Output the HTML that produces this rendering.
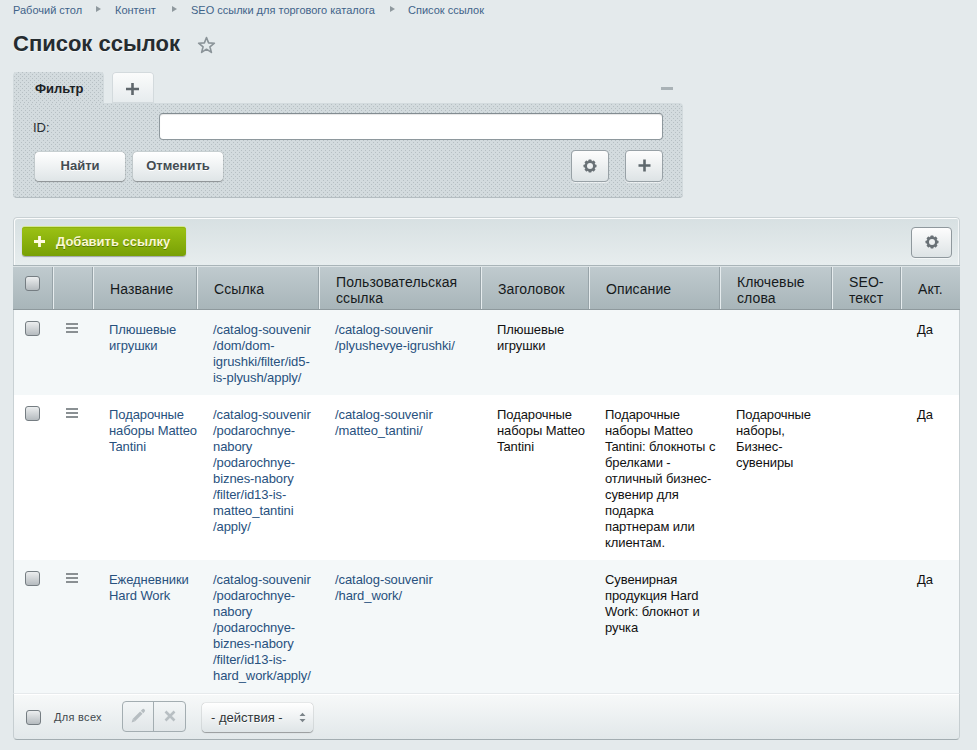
<!DOCTYPE html>
<html><head><meta charset="utf-8">
<style>
*{box-sizing:border-box;}
html,body{margin:0;padding:0;}
body{width:977px;height:750px;overflow:hidden;position:relative;background:#e4eaec;font-family:"Liberation Sans",sans-serif;}
.a{position:absolute;}
.bc{position:absolute;top:3px;font-size:11px;line-height:14px;color:#3f6389;white-space:nowrap;}
.arr{position:absolute;top:6px;width:0;height:0;border-left:5px solid #8f999e;border-top:3.5px solid transparent;border-bottom:3.5px solid transparent;}
.title{position:absolute;left:13px;top:31px;font-size:22px;line-height:26px;font-weight:bold;color:#252c30;text-shadow:0 1px rgba(255,255,255,.6);white-space:nowrap;}
.dots{background-color:#d3dbde;overflow:hidden;}
.dots svg{display:block;}
.btn{position:absolute;height:29px;border-radius:4px;background:linear-gradient(#ffffff,#dfe5e7);box-shadow:0 0 1px rgba(0,0,0,.55),0 1px 1px rgba(0,0,0,.3);font-size:13px;font-weight:bold;color:#434c52;text-align:center;line-height:27px;white-space:nowrap;text-shadow:0 1px #fff;}
.sbtn{position:absolute;border-radius:4px;border:1px solid #8f989d;background:linear-gradient(#fdfdfd,#dde3e5);box-shadow:0 1px rgba(255,255,255,.6);}
.cb{position:absolute;width:15px;height:15px;border-radius:3px;border:1px solid #757d82;background:linear-gradient(#eceeef,#b5bbbf);}
.hd{position:absolute;top:265px;height:45px;}
.sep{position:absolute;top:267px;height:42px;width:2px;border-left:1px solid #97a3a8;border-right:1px solid #e6ecee;}
.ht{position:absolute;font-size:14px;letter-spacing:.1px;line-height:16px;color:#161a1c;white-space:nowrap;}
.t{position:absolute;font-size:13px;line-height:16px;color:#111;white-space:nowrap;letter-spacing:-.08px;}
.l{color:#28517e;}
.menu{position:absolute;width:12px;height:10px;border-top:2px solid #8a9093;border-bottom:2px solid #8a9093;}
.menu:after{content:"";position:absolute;left:0;right:0;top:2px;height:2px;background:#8a9093;}
</style></head>
<body>
<svg width="0" height="0" style="position:absolute"><defs><pattern id="dp" width="4" height="4" patternUnits="userSpaceOnUse"><rect x="2" y="1" width="1" height="1" fill="#b6bfc3"/><rect x="0" y="3" width="1" height="1" fill="#b6bfc3"/></pattern><pattern id="dt" width="4" height="4" patternUnits="userSpaceOnUse"><rect x="1" y="0" width="1" height="1" fill="#b6bfc3"/><rect x="3" y="2" width="1" height="1" fill="#b6bfc3"/></pattern><mask id="gm"><rect width="14" height="14" fill="#fff"/><circle cx="7" cy="7" r="3" fill="#000"/></mask></defs></svg>
<!-- breadcrumbs -->
<div class="bc" style="left:13px">Рабочий стол</div>
<div class="arr" style="left:96px"></div>
<div class="bc" style="left:115px">Контент</div>
<div class="arr" style="left:172px"></div>
<div class="bc" style="left:191px">SEO ссылки для торгового каталога</div>
<div class="arr" style="left:390px"></div>
<div class="bc" style="left:408px">Список ссылок</div>
<div class="title">Список ссылок</div>
<svg class="a" style="left:196.5px;top:36px" width="19" height="18" viewBox="0 0 19 18"><path d="M9.5 1.5 L11.6 6.9 L17.4 7.2 L12.9 10.8 L14.4 16.4 L9.5 13.2 L4.6 16.4 L6.1 10.8 L1.6 7.2 L7.4 6.9 Z" fill="none" stroke="#8a9398" stroke-width="1.6" stroke-linejoin="round"/></svg>

<!-- filter -->
<div class="a dots" style="left:13px;top:72px;width:91px;height:32px;border-radius:4px 4px 0 0;"><svg width="91" height="32"><rect width="91" height="32" fill="url(#dt)"/></svg></div>
<div class="a" style="left:35px;top:81px;font-size:13px;font-weight:bold;line-height:16px;color:#1c2124;">Фильтр</div>
<div class="a" style="left:112px;top:72px;width:42px;height:31px;border-radius:4px 4px 0 0;background:linear-gradient(#fbfcfc,#e6ebed);box-shadow:inset 0 0 0 1px #d3dadd;"></div>
<svg class="a" style="left:126px;top:83px" width="13" height="12" viewBox="0 0 13 12"><path d="M6.5 0v12M0 6h13" stroke="#5f676c" stroke-width="2.6"/></svg>
<div class="a" style="left:661px;top:87px;width:12px;height:3px;background:#a9b2b6;"></div>
<div class="a dots" style="left:13px;top:103px;width:670px;height:95px;border-radius:0 4px 4px 4px;border-bottom:1px solid #b4bdc1;"><svg width="670" height="95"><rect width="670" height="95" fill="url(#dp)"/></svg></div>
<div class="a" style="left:33px;top:120px;font-size:13px;line-height:16px;color:#2a2f33;">ID:</div>
<div class="a" style="left:159px;top:113px;width:504px;height:27px;border-radius:4px;background:#fff;border:1px solid #8e989d;border-top-color:#828c91;box-shadow:inset 0 1px 1px rgba(0,0,0,.1);"></div>
<div class="btn" style="left:35px;top:152px;width:90px;">Найти</div>
<div class="btn" style="left:133px;top:152px;width:90px;">Отменить</div>
<div class="sbtn" style="left:571px;top:150px;width:38px;height:32px;border-color:#98a1a6;"></div>
<div class="sbtn" style="left:625px;top:150px;width:38px;height:32px;border-color:#98a1a6;"></div>
<svg class="a" style="left:583px;top:159px" width="14" height="14" viewBox="0 0 14 14"><g fill="#697176" mask="url(#gm)"><circle cx="7" cy="7" r="5.3"/><rect x="5.4" y="0.5" width="3.2" height="13" rx="0.8"/><rect x="0.5" y="5.4" width="13" height="3.2" rx="0.8"/><rect x="5.4" y="0.5" width="3.2" height="13" rx="0.8" transform="rotate(45 7 7)"/><rect x="5.4" y="0.5" width="3.2" height="13" rx="0.8" transform="rotate(-45 7 7)"/></g></svg>
<svg class="a" style="left:638px;top:159px" width="13" height="13" viewBox="0 0 13 13"><path d="M6.5 0.5v12M0.5 6.5h12" stroke="#5f686d" stroke-width="2.6"/></svg>

<!-- table container -->
<div class="a" style="left:13px;top:217px;width:947px;height:523px;border-radius:4px;background:#fff;"></div>
<div class="a" style="left:13px;top:217px;width:947px;height:48px;border-radius:4px 4px 0 0;background:linear-gradient(#d7e0e2,#e7edee);border:1px solid #c9d1d4;border-bottom:none;box-shadow:inset 1px 1px #fbfcfc,inset -1px 0 #f3f6f7;"></div>
<div class="a" style="left:22px;top:227px;width:164px;height:29px;border-radius:3px;background:linear-gradient(#9cc214,#78a005);box-shadow:0 -1px #d3e88f,inset 0 1px #8fb00f,0 1px 1px rgba(0,0,0,.3);"></div>
<svg class="a" style="left:33.5px;top:236px" width="11" height="11" viewBox="0 0 11 11"><path d="M5.5 0v11M0 5.5h11" stroke="#fffbe0" stroke-width="2.8"/></svg>
<div class="a" style="left:56px;top:234px;font-size:13px;font-weight:bold;line-height:16px;color:#fbf8d2;text-shadow:0 1px rgba(60,85,0,.6);white-space:nowrap;">Добавить ссылку</div>
<div class="sbtn" style="left:911px;top:227px;width:41px;height:31px;"></div>
<svg class="a" style="left:925px;top:235px" width="14" height="14" viewBox="0 0 14 14"><g fill="#697176" mask="url(#gm)"><circle cx="7" cy="7" r="5.3"/><rect x="5.4" y="0.5" width="3.2" height="13" rx="0.8"/><rect x="0.5" y="5.4" width="13" height="3.2" rx="0.8"/><rect x="5.4" y="0.5" width="3.2" height="13" rx="0.8" transform="rotate(45 7 7)"/><rect x="5.4" y="0.5" width="3.2" height="13" rx="0.8" transform="rotate(-45 7 7)"/></g></svg>

<!-- header -->
<div class="hd" style="left:13px;width:947px;background:linear-gradient(#c0cbcf,#a8b5b9);border-top:1px solid #a9b4b8;border-bottom:1px solid #8e999d;box-shadow:inset 0 1px #dde4e6;"></div>
<div class="sep" style="left:52px"></div>
<div class="sep" style="left:92px"></div>
<div class="sep" style="left:196px"></div>
<div class="sep" style="left:318px"></div>
<div class="sep" style="left:480px"></div>
<div class="sep" style="left:588px"></div>
<div class="sep" style="left:719px"></div>
<div class="sep" style="left:831px"></div>
<div class="sep" style="left:900px"></div>
<div class="cb" style="left:25px;top:276px"></div>
<div class="ht" style="left:110px;top:281px">Название</div>
<div class="ht" style="left:214px;top:281px">Ссылка</div>
<div class="ht" style="left:336px;top:274px">Пользовательская<br>ссылка</div>
<div class="ht" style="left:498px;top:281px">Заголовок</div>
<div class="ht" style="left:606px;top:281px">Описание</div>
<div class="ht" style="left:737px;top:274px">Ключевые<br>слова</div>
<div class="ht" style="left:849px;top:274px">SEO-<br>текст</div>
<div class="ht" style="left:918px;top:281px">Акт.</div>

<!-- rows -->
<div class="a" style="left:13px;top:310px;width:947px;height:85px;background:#f4f8f9;"></div>
<div class="a" style="left:13px;top:395px;width:947px;height:165px;background:#fff;"></div>
<div class="a" style="left:13px;top:560px;width:947px;height:133px;background:#f4f8f9;"></div>
<div class="a" style="left:13px;top:310px;width:947px;height:383px;border-left:1px solid #c9d1d4;border-right:1px solid #c9d1d4;"></div>

<div class="cb" style="left:25px;top:321px"></div>
<div class="menu" style="left:66px;top:323px"></div>
<div class="t l" style="left:109px;top:322px">Плюшевые<br>игрушки</div>
<div class="t l" style="left:213px;top:322px">/catalog-souvenir<br>/dom/dom-<br>igrushki/filter/id5-<br>is-plyush/apply/</div>
<div class="t l" style="left:335px;top:322px">/catalog-souvenir<br>/plyushevye-igrushki/</div>
<div class="t" style="left:497px;top:322px">Плюшевые<br>игрушки</div>
<div class="t" style="left:917px;top:322px">Да</div>

<div class="cb" style="left:25px;top:406px"></div>
<div class="menu" style="left:66px;top:408px"></div>
<div class="t l" style="left:109px;top:407px">Подарочные<br>наборы Matteo<br>Tantini</div>
<div class="t l" style="left:213px;top:407px">/catalog-souvenir<br>/podarochnye-<br>nabory<br>/podarochnye-<br>biznes-nabory<br>/filter/id13-is-<br>matteo_tantini<br>/apply/</div>
<div class="t l" style="left:335px;top:407px">/catalog-souvenir<br>/matteo_tantini/</div>
<div class="t" style="left:497px;top:407px">Подарочные<br>наборы Matteo<br>Tantini</div>
<div class="t" style="left:605px;top:407px">Подарочные<br>наборы Matteo<br>Tantini: блокноты с<br>брелками -<br>отличный бизнес-<br>сувенир для<br>подарка<br>партнерам или<br>клиентам.</div>
<div class="t" style="left:736px;top:407px">Подарочные<br>наборы,<br>Бизнес-<br>сувениры</div>
<div class="t" style="left:917px;top:407px">Да</div>

<div class="cb" style="left:25px;top:571px"></div>
<div class="menu" style="left:66px;top:573px"></div>
<div class="t l" style="left:109px;top:572px">Ежедневники<br>Hard Work</div>
<div class="t l" style="left:213px;top:572px">/catalog-souvenir<br>/podarochnye-<br>nabory<br>/podarochnye-<br>biznes-nabory<br>/filter/id13-is-<br>hard_work/apply/</div>
<div class="t l" style="left:335px;top:572px">/catalog-souvenir<br>/hard_work/</div>
<div class="t" style="left:605px;top:572px">Сувенирная<br>продукция Hard<br>Work: блокнот и<br>ручка</div>
<div class="t" style="left:917px;top:572px">Да</div>

<!-- footer -->
<div class="a" style="left:13px;top:693px;width:947px;height:47px;border-radius:0 0 4px 4px;background:linear-gradient(#f7f9f9,#e2e8ea);border:1px solid #c6ced1;border-top-color:#e6eaec;border-bottom-color:#a3adb1;box-shadow:inset 0 1px #fff;"></div>
<div class="cb" style="left:26px;top:710px"></div>
<div class="a" style="left:54px;top:710px;font-size:11px;line-height:14px;color:#3f474c;letter-spacing:.3px;white-space:nowrap;">Для всех</div>
<div class="a" style="left:122px;top:701px;width:64px;height:31px;border-radius:4px;border:1px solid #a3adb1;background:linear-gradient(#f3f6f7,#e1e6e8);"></div>
<div class="a" style="left:153px;top:702px;width:1px;height:29px;background:#a3adb1;"></div>
<svg class="a" style="left:122px;top:700px" width="32" height="32" viewBox="0 0 32 32"><g transform="translate(9.6 22.4) rotate(-45)" fill="#b6bdc1"><path d="M0 0 L3.2 -1.7 L3.2 1.7 Z"/><rect x="3.2" y="-1.7" width="10.6" height="3.4"/><path d="M14.8 -1.7 H16.6 A1.7 1.7 0 0 1 16.6 1.7 H14.8 Z"/></g></svg>
<svg class="a" style="left:164px;top:710px" width="12" height="12" viewBox="0 0 12 12"><path d="M1.5 1.5L10.5 10.5M10.5 1.5L1.5 10.5" stroke="#b8bfc3" stroke-width="2.6"/></svg>

<div class="btn" style="left:202px;top:703px;width:111px;height:29px;font-weight:normal;text-align:left;padding-left:9px;line-height:30px;color:#2f3538;"> - действия -</div>
<svg class="a" style="left:299px;top:712px" width="7" height="11" viewBox="0 0 7 11"><path d="M0.5 4L3.5 0.8L6.5 4Z M0.5 7L3.5 10.2L6.5 7Z" fill="#7b8489"/></svg>
</body></html>
